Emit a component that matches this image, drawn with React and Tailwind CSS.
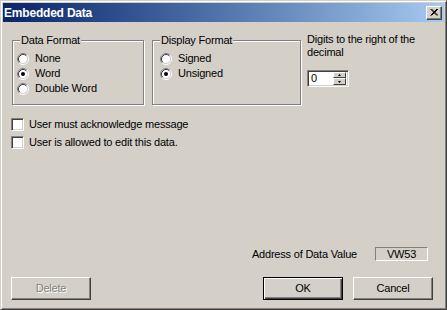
import React from 'react';

const FONT = "font-['Liberation_Sans',Arial,sans-serif]";

function Radio({ checked }) {
  return (
    <svg width="12" height="12" viewBox="0 0 12 12" className="shrink-0">
      <circle cx="6" cy="6" r="4.5" fill="#fff" />
      <path d="M2.11 9.89 A5.5 5.5 0 0 1 9.89 2.11" fill="none" stroke="#808080" strokeWidth="1" />
      <path d="M9.89 2.11 A5.5 5.5 0 0 1 2.11 9.89" fill="none" stroke="#fff" strokeWidth="1" />
      <path d="M2.82 9.18 A4.5 4.5 0 0 1 9.18 2.82" fill="none" stroke="#404040" strokeWidth="1" />
      <path d="M9.18 2.82 A4.5 4.5 0 0 1 2.82 9.18" fill="none" stroke="#d4d0c8" strokeWidth="1" />
      {checked && <circle cx="6" cy="6" r="2" fill="#000" />}
    </svg>
  );
}

function RadioRow({ label, checked }) {
  return (
    <div className="flex items-center h-[15px]">
      <Radio checked={checked} />
      <span className="ml-[6px]">{label}</span>
    </div>
  );
}

function Checkbox({ label }) {
  return (
    <div className="flex items-center h-[18px]">
      <div className="w-[13px] h-[13px] bg-white border border-t-[#808080] border-l-[#808080] border-b-white border-r-white shadow-[inset_1px_1px_0_#404040,inset_-1px_-1px_0_#d4d0c8]" />
      <span className="ml-[5px]">{label}</span>
    </div>
  );
}

function GroupBox({ title, className, children }) {
  return (
    <div className={`flex flex-col h-[65px] border border-[#808080] shadow-[1px_1px_0_#fff,inset_1px_1px_0_#fff] ${className}`}>
      <span className="-mt-[7px] ml-[7px] px-px w-fit leading-[13px] bg-[#d4d0c8]">{title}</span>
      {children}
    </div>
  );
}

function Button({ children, isDefault, disabled }) {
  const frame = isDefault
    ? 'border border-black shadow-[inset_1px_1px_0_#fff,inset_-1px_-1px_0_#404040,inset_-2px_-2px_0_#808080]'
    : 'border border-t-white border-l-white border-b-[#404040] border-r-[#404040] shadow-[inset_-1px_-1px_0_#808080]';
  return (
    <button
      className={`w-[80px] h-[23px] bg-[#d4d0c8] flex items-center justify-center ${frame} ${
        disabled ? 'text-[#808080] [text-shadow:1px_1px_0_#fff]' : 'text-black'
      }`}
    >
      {children}
    </button>
  );
}

export default function App() {
  return (
    <div
      className={`${FONT} text-[11px] tracking-[-0.2px] text-black w-[447px] h-[310px] bg-[#d4d0c8] flex flex-col p-[2px] border border-t-[#d4d0c8] border-l-[#d4d0c8] border-b-[#404040] border-r-[#404040] shadow-[inset_1px_1px_0_#fff,inset_-1px_-1px_0_#808080]`}
    >
      {/* Title bar */}
      <div className="h-[19px] flex items-center justify-between pl-[1px] pr-[2px] bg-gradient-to-r from-[#0a246a] to-[#a6caf0]">
        <span className="text-white font-bold text-[12px] tracking-[-0.2px]">Embedded Data</span>
        <div className="w-[16px] h-[14px] bg-[#d4d0c8] flex items-center justify-center border border-t-white border-l-white border-b-[#404040] border-r-[#404040] shadow-[inset_-1px_-1px_0_#808080]">
          <svg width="8" height="7" viewBox="0 0 8 7">
            <path d="M0.5 0 L7 6.5 M1.5 0 L8 6.5 M7 0 L0.5 6.5 M8 0 L1.5 6.5" stroke="#000" strokeWidth="1" fill="none" />
          </svg>
        </div>
      </div>

      {/* Body */}
      <div className="flex-1 flex flex-col pl-[8px] pr-[11px] pb-[7px]">
        <div className="flex items-start mt-[18px]">
          <GroupBox title="Data Format" className="ml-px w-[132px]">
            <div className="flex flex-col mt-[4px] pl-[4px]">
              <RadioRow label="None" />
              <RadioRow label="Word" checked />
              <RadioRow label="Double Word" />
            </div>
          </GroupBox>
          <GroupBox title="Display Format" className="ml-[8px] w-[149px]">
            <div className="flex flex-col mt-[4px] pl-[7px]">
              <RadioRow label="Signed" />
              <RadioRow label="Unsigned" checked />
            </div>
          </GroupBox>
          <div className="ml-[6px] -mt-[7px] flex flex-col leading-[13px]">
            <span>Digits to the right of the</span>
            <span>decimal</span>
            <div className="mt-[11px] w-[42px] h-[17px] flex border border-t-[#808080] border-l-[#808080] border-b-white border-r-white shadow-[inset_1px_1px_0_#404040,inset_-1px_-1px_0_#d4d0c8] p-px">
              <div className="flex-1 bg-white flex items-center pl-[2px]">0</div>
              <div className="w-[14px] flex flex-col bg-white pr-px">
                <div className="h-[6px] bg-[#d4d0c8] flex items-center justify-center border border-t-white border-l-white border-b-[#404040] border-r-[#404040]">
                  <svg width="3" height="2" viewBox="0 0 3 2"><path d="M1.5 0 L3 2 L0 2 Z" fill="#000" /></svg>
                </div>
                <div className="h-[7px] bg-[#d4d0c8] flex items-center justify-center border border-t-white border-l-white border-b-[#404040] border-r-[#404040]">
                  <svg width="3" height="2" viewBox="0 0 3 2"><path d="M0 0 L3 0 L1.5 2 Z" fill="#000" /></svg>
                </div>
              </div>
            </div>
          </div>
        </div>

        <div className="flex flex-col mt-[10px]">
          <Checkbox label="User must acknowledge message" />
          <Checkbox label="User is allowed to edit this data." />
        </div>

        <div className="flex-1" />

        <div className="flex items-center justify-end pr-[5px] gap-[18px]">
          <span>Address of Data Value</span>
          <div className="w-[53px] h-[14px] flex items-center justify-center border border-t-[#808080] border-l-[#808080] border-b-white border-r-white">
            VW53
          </div>
        </div>

        <div className="flex items-center mt-[15px]">
          <Button disabled>Delete</Button>
          <div className="flex-1" />
          <Button isDefault>OK</Button>
          <div className="w-[10px]" />
          <Button>Cancel</Button>
        </div>
      </div>
    </div>
  );
}
